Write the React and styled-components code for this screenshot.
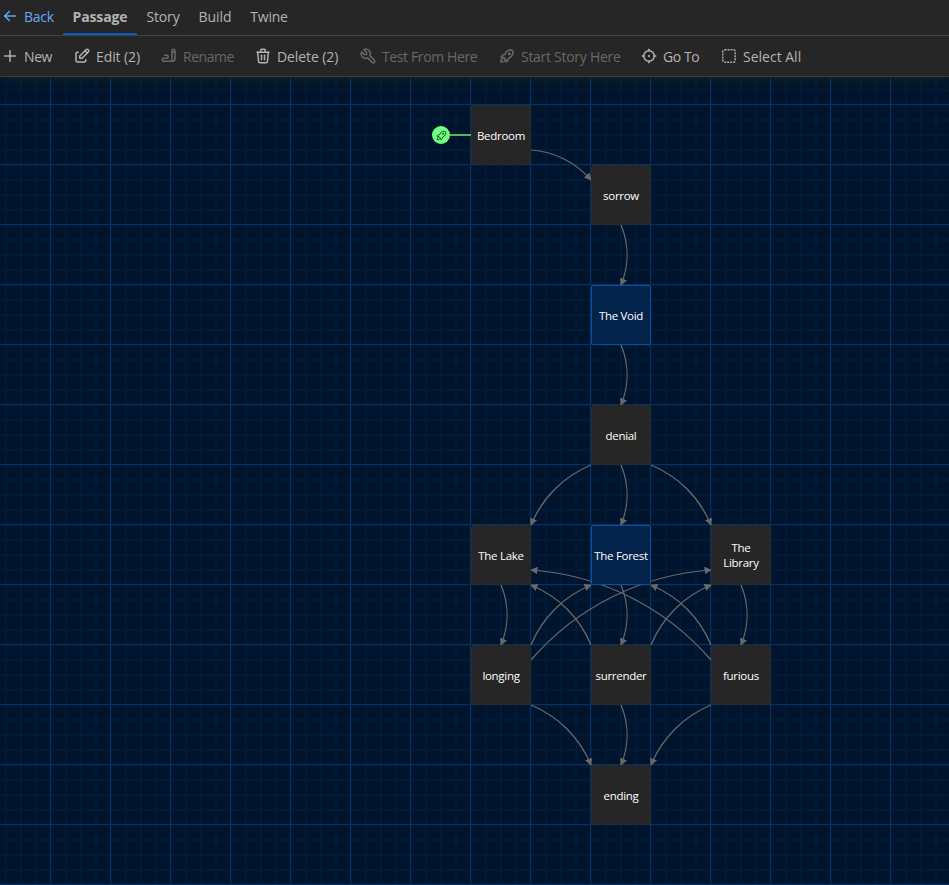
import React from "react";
import styled, { createGlobalStyle, css } from "styled-components";
import {
  TbArrowLeft,
  TbPlus,
  TbEdit,
  TbWriting,
  TbTrash,
  TbTool,
  TbRocket,
  TbFocus2,
} from "react-icons/tb";

const GlobalStyle = createGlobalStyle`
  * { box-sizing: border-box; }
  body {
    margin: 0;
    background: #00152d;
    font-family: "Segoe UI", "Open Sans", "Noto Sans", sans-serif;
    overflow: hidden;
  }
`;

const Page = styled.div`
  display: flex;
  flex-direction: column;
  height: 100vh;
  overflow: hidden;
`;

const Toolbar = styled.header`
  position: relative;
  z-index: 2;
  flex: none;
  height: 77px;
  background: #262626;
  border-bottom: 1px solid #3c3c3c;
  box-shadow: 0 0 12px rgba(38, 38, 38, 0.9);
  color: #b3b3b3;
  font-size: 14px;
  line-height: 20px;
`;

const TabRow = styled.nav`
  display: flex;
  height: 36px;
  border-bottom: 1px solid #414141;
`;

const BackLink = styled.div`
  display: flex;
  align-items: center;
  width: 63px;
  padding: 0 0 1px 1px;
  color: #66a8f5;
  letter-spacing: -0.3px;
  svg { width: 18px; height: 18px; margin: -2px 5px 0 0; }
`;

const Tab = styled.div`
  width: ${(p) => p.$width}px;
  display: flex;
  align-items: center;
  justify-content: center;
  padding-bottom: 1px;
  white-space: nowrap;
  letter-spacing: ${(p) => p.$spacing || 0}px;
  ${(p) =>
    p.$active &&
    css`
      font-weight: 700;
      box-shadow: inset 0 -2px #0a5cc4;
    `}
`;

const ActionRow = styled.div`
  display: flex;
  height: 40px;
  padding-left: 1px;
`;

const Action = styled.div`
  display: flex;
  flex: none;
  align-items: center;
  width: ${(p) => p.$width}px;
  color: ${(p) => (p.$disabled ? "#686868" : "#b3b3b3")};
  white-space: nowrap;
  letter-spacing: ${(p) => p.$spacing || 0}px;
  padding-top: 2px;
  svg { flex: none; width: 18px; height: 18px; margin: -3px 5px 0 0; }
`;

const Canvas = styled.main`
  position: relative;
  flex: 1;
  background-color: #00152d;
  background-image: linear-gradient(#033266 1px, transparent 1px),
    linear-gradient(90deg, #033266 1px, transparent 1px),
    linear-gradient(#001b37 2px, transparent 2px),
    linear-gradient(90deg, #001b37 2px, transparent 2px);
  background-size: 60px 60px, 60px 60px, 15px 15px, 15px 15px;
  background-position: 0 27px, 50px 0, 0 12px, 5px 0;
`;

const Links = styled.svg`
  position: absolute;
  top: 0;
  left: 0;
  fill: none;
  stroke: #696969;
  stroke-width: 1.25;
`;

const Passage = styled.div`
  position: absolute;
  left: ${(p) => p.$x}px;
  top: ${(p) => p.$y - 77}px;
  width: 60px;
  height: 60px;
  display: flex;
  align-items: center;
  justify-content: center;
  text-align: center;
  border-radius: 2px;
  background: ${(p) => (p.$selected ? "#03234a" : "#262626")};
  border: 1px solid ${(p) => (p.$selected ? "#0a4fa5" : "#292928")};
  color: #ffffff;
  font-size: 11.5px;
  font-weight: 500;
  line-height: 15px;
  letter-spacing: -0.3px;
  span { flex: none; max-width: ${(p) => (p.$wrap ? 50 : 70)}px; }
`;

const StartMarker = styled.div`
  position: absolute;
  left: 432px;
  top: 49px;
  width: 18px;
  height: 18px;
  border-radius: 50%;
  background: #70ff80;
  color: #173a1c;
  display: grid;
  place-items: center;
  svg { width: 13px; height: 13px; stroke-width: 1.5; }
`;

const SelectAllIcon = () => (
  <svg viewBox="0 0 18 18" fill="none" stroke="currentColor" strokeWidth="1.4">
    <rect x="2.8" y="2.8" width="12.4" height="12.4" rx="1.8" strokeDasharray="1.9 1.1" />
  </svg>
);

const tabs = [
  { label: "Passage", width: 74, active: true, spacing: -0.15 },
  { label: "Story", width: 52, spacing: -0.15 },
  { label: "Build", width: 52, spacing: -0.1 },
  { label: "Twine", width: 56, spacing: -0.25 },
];

const actions = [
  { label: "New", icon: TbPlus, width: 72, spacing: -0.4 },
  { label: "Edit (2)", icon: TbEdit, width: 87, spacing: -0.1 },
  { label: "Rename", icon: TbWriting, width: 94, disabled: true, spacing: -0.45 },
  { label: "Delete (2)", icon: TbTrash, width: 105, spacing: -0.1 },
  { label: "Test From Here", icon: TbTool, width: 139, disabled: true, spacing: -0.38 },
  { label: "Start Story Here", icon: TbRocket, width: 142, disabled: true, spacing: -0.28 },
  { label: "Go To", icon: TbFocus2, width: 80, spacing: -0.4 },
  { label: "Select All", icon: SelectAllIcon, width: 90 },
];

const passages = [
  { name: "Bedroom", x: 471, y: 105 },
  { name: "sorrow", x: 591, y: 165 },
  { name: "The Void", x: 591, y: 285, selected: true },
  { name: "denial", x: 591, y: 405 },
  { name: "The Lake", x: 471, y: 525 },
  { name: "The Forest", x: 591, y: 525, selected: true },
  { name: "The Library", x: 711, y: 525, wrap: true },
  { name: "longing", x: 471, y: 645 },
  { name: "surrender", x: 591, y: 645 },
  { name: "furious", x: 711, y: 645 },
  { name: "ending", x: 591, y: 765 },
];

// Start point, end point and arc sweep direction of each link.
const links = [
  [531, 150, 591, 180, 1],
  [621, 225, 621, 285, 1],
  [621, 345, 621, 405, 1],
  [591, 465, 531, 525, 0],
  [621, 465, 621, 525, 1],
  [651, 465, 711, 525, 1],
  [501, 585, 501, 645, 1],
  [621, 585, 621, 645, 1],
  [741, 585, 741, 645, 1],
  [531, 645, 591, 585, 1],
  [531, 660, 711, 570, 1],
  [591, 645, 531, 585, 0],
  [651, 645, 711, 585, 1],
  [711, 645, 651, 585, 0],
  [711, 660, 531, 570, 0],
  [531, 705, 591, 765, 1],
  [621, 705, 621, 765, 1],
  [711, 705, 651, 765, 0],
];

const arc = ([x1, y1, x2, y2, sweep]) => {
  const r = Math.hypot(x2 - x1, y2 - y1) * 1.3;
  return `M${x1} ${y1}A${r} ${r} 0 0 ${sweep} ${x2} ${y2}`;
};

export default function App() {
  return (
    <Page>
      <GlobalStyle />
      <Toolbar>
        <TabRow>
          <BackLink><TbArrowLeft />Back</BackLink>
          {tabs.map((t) => (
            <Tab key={t.label} $width={t.width} $active={t.active} $spacing={t.spacing}>{t.label}</Tab>
          ))}
        </TabRow>
        <ActionRow>
          {actions.map(({ label, icon: Icon, width, disabled, spacing }) => (
            <Action key={label} $width={width} $disabled={disabled} $spacing={spacing}>
              <Icon /><span>{label}</span>
            </Action>
          ))}
        </ActionRow>
      </Toolbar>
      <Canvas>
        <Links width="949" height="808" viewBox="0 77 949 808">
          <defs>
            <marker id="arrow" viewBox="0 0 8 8" refX="7" refY="4" markerWidth="7.5" markerHeight="7.5" markerUnits="userSpaceOnUse" orient="auto">
              <path d="M0 0L8 4L0 8Z" fill="#696969" stroke="none" />
            </marker>
          </defs>
          <path d="M450 135H471" stroke="#52b961" strokeWidth="2" />
          {links.map((l) => <path key={l.join()} d={arc(l)} markerEnd="url(#arrow)" />)}
        </Links>
        <StartMarker><TbRocket /></StartMarker>
        {passages.map((p) => (
          <Passage key={p.name} $x={p.x} $y={p.y} $selected={p.selected} $wrap={p.wrap}>
            <span>{p.name}</span>
          </Passage>
        ))}
      </Canvas>
    </Page>
  );
}
